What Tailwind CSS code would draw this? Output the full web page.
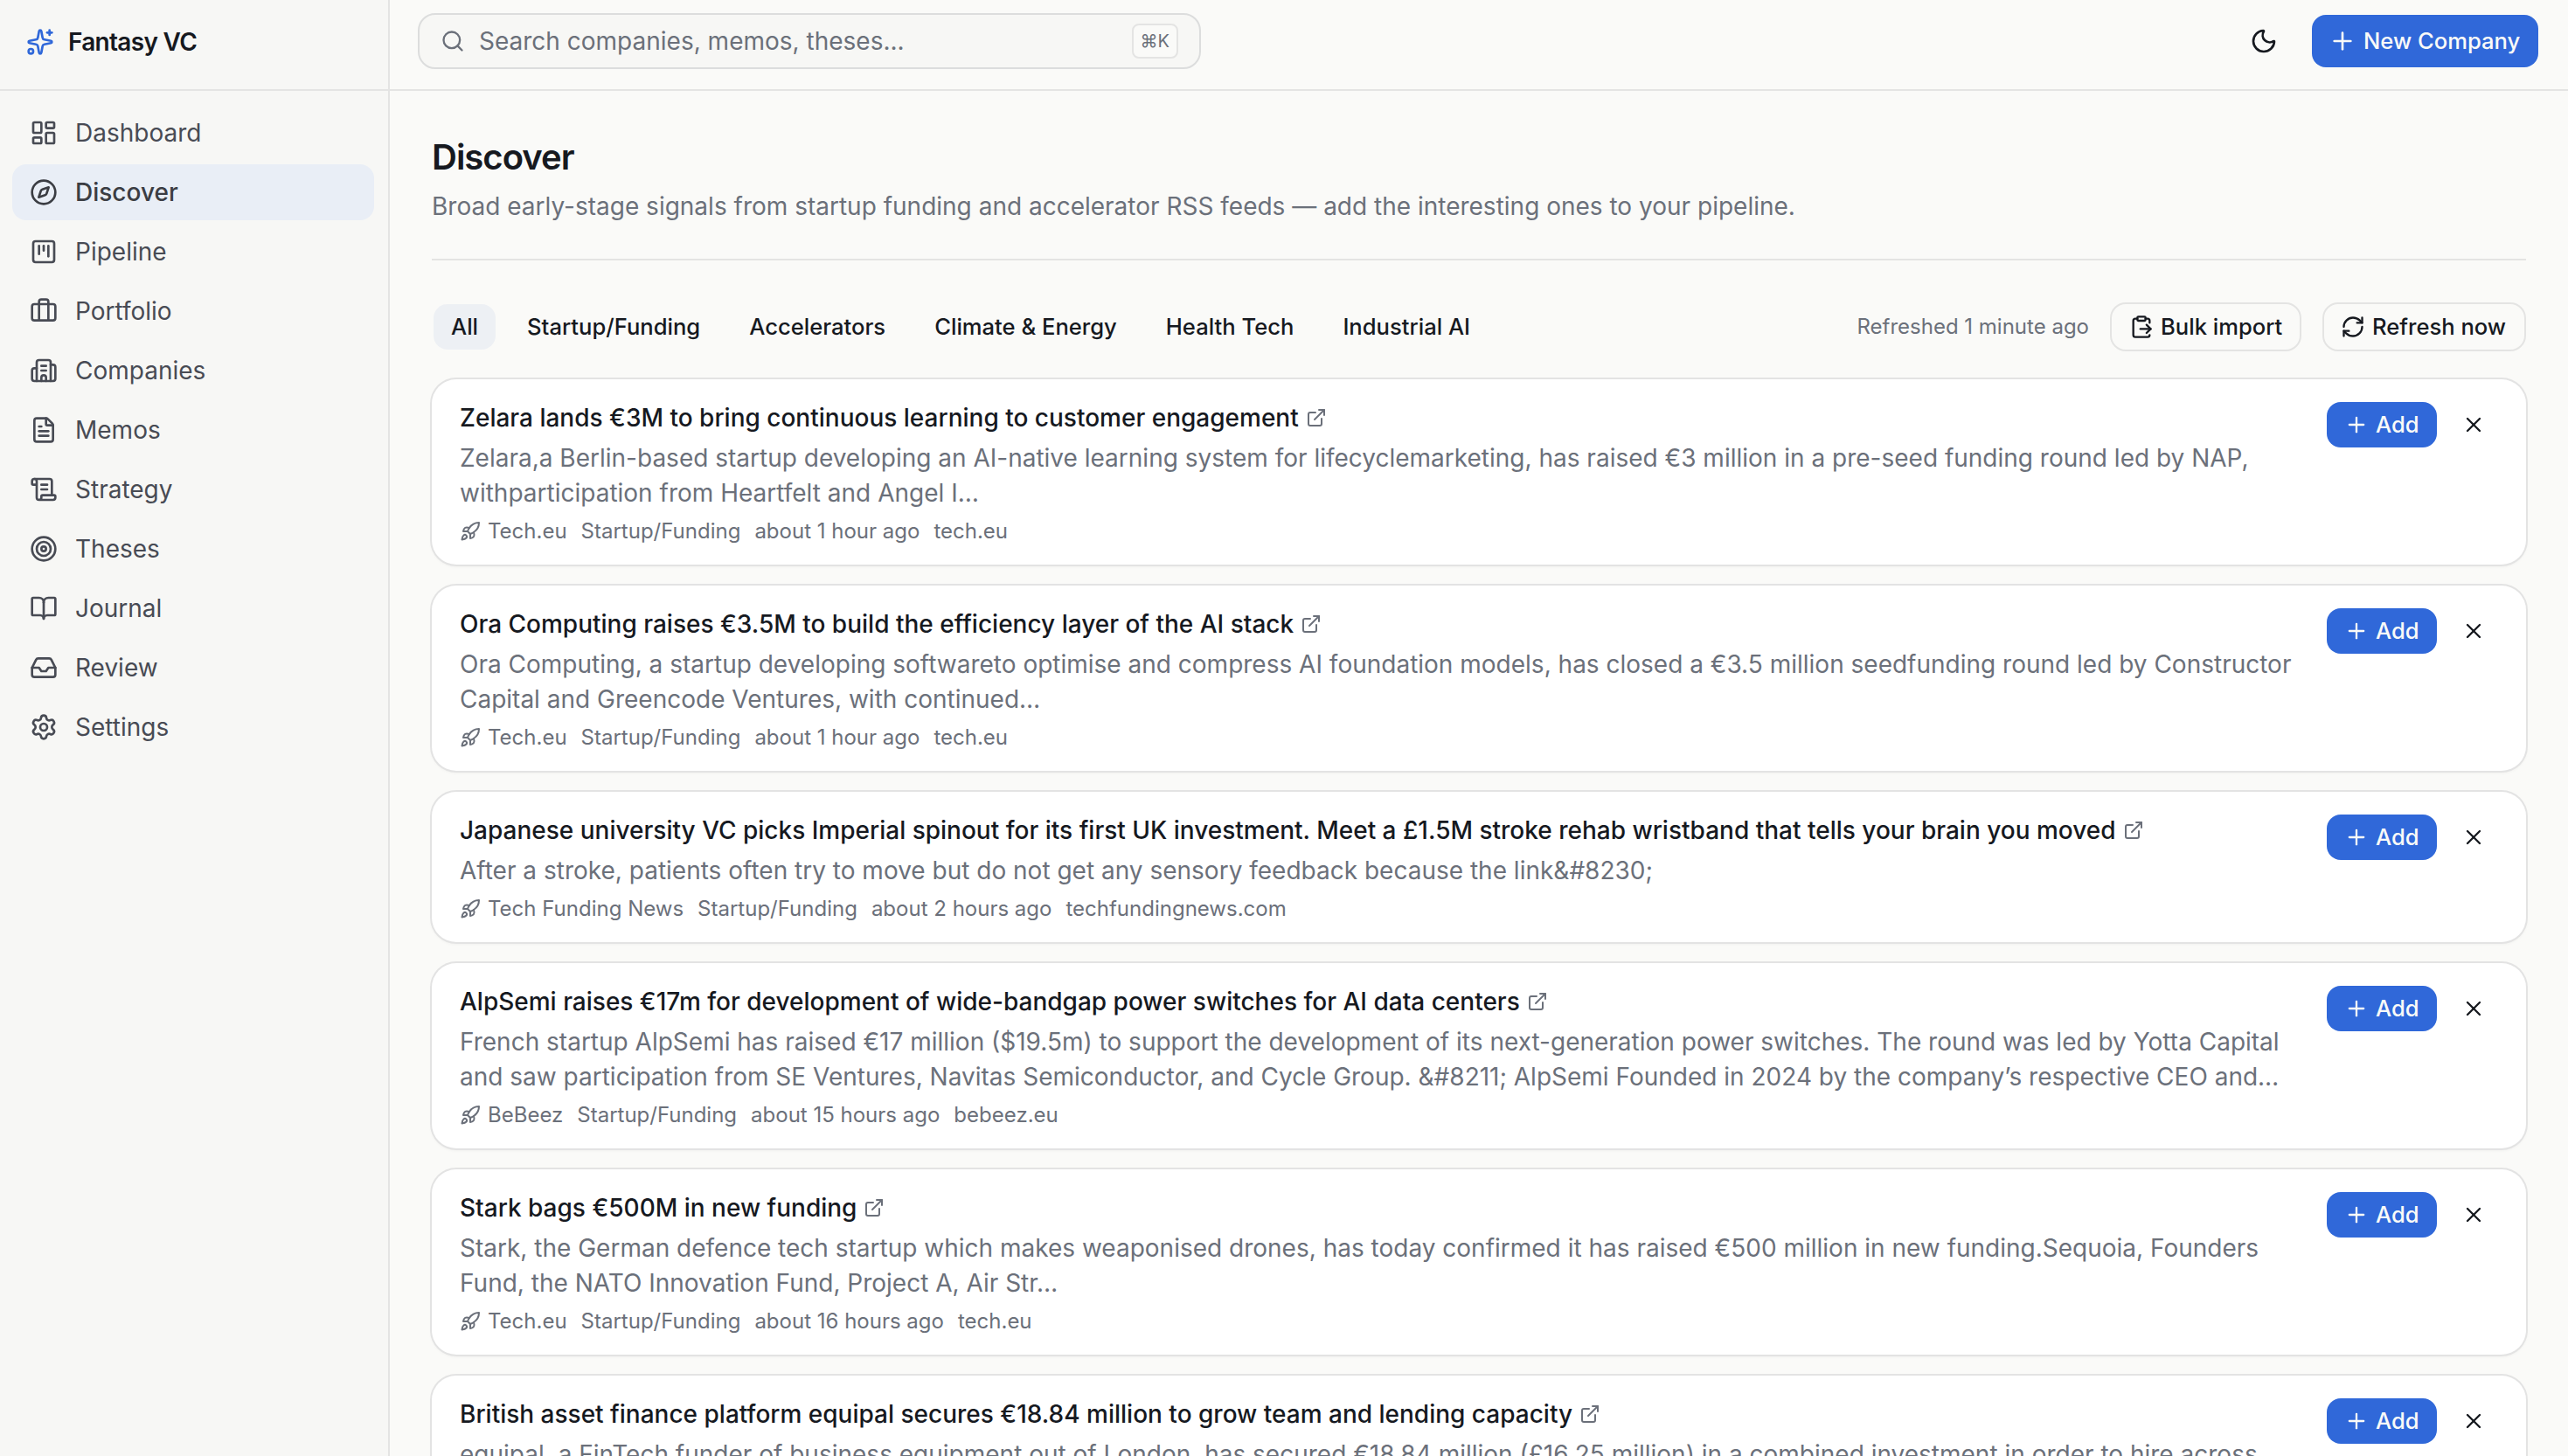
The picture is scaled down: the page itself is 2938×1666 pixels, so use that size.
<!DOCTYPE html>
<html lang="en">
<head>
<meta charset="utf-8">
<title>Fantasy VC</title>
<script src="https://cdn.jsdelivr.net/npm/@tailwindcss/browser@4"></script>
</head>
<body class="h-[1666px] w-[2938px] overflow-hidden bg-[#fafaf8] font-['Inter',sans-serif] text-[28px] leading-[40px] text-[#16191f] antialiased [font-variation-settings:'opsz'_14]">
<svg class="hidden">
  <symbol id="sparkles" viewBox="0 0 24 24"><path d="M11.017 2.814a1 1 0 0 1 1.966 0l1.051 5.558a2 2 0 0 0 1.594 1.594l5.558 1.051a1 1 0 0 1 0 1.966l-5.558 1.051a2 2 0 0 0-1.594 1.594l-1.051 5.558a1 1 0 0 1-1.966 0l-1.051-5.558a2 2 0 0 0-1.594-1.594l-5.558-1.051a1 1 0 0 1 0-1.966l5.558-1.051a2 2 0 0 0 1.594-1.594z"/><path d="M20 2v4"/><path d="M22 4h-4"/><circle cx="4" cy="20" r="2"/></symbol>
  <symbol id="dashboard" viewBox="0 0 24 24"><rect width="7" height="9" x="3" y="3" rx="1"/><rect width="7" height="5" x="14" y="3" rx="1"/><rect width="7" height="9" x="14" y="12" rx="1"/><rect width="7" height="5" x="3" y="16" rx="1"/></symbol>
  <symbol id="compass" viewBox="0 0 24 24"><circle cx="12" cy="12" r="10"/><path d="m16.24 7.76-1.804 5.411a2 2 0 0 1-1.265 1.265L7.76 16.24l1.804-5.411a2 2 0 0 1 1.265-1.265z"/></symbol>
  <symbol id="kanban" viewBox="0 0 24 24"><rect width="18" height="18" x="3" y="3" rx="2"/><path d="M8 7v7"/><path d="M12 7v4"/><path d="M16 7v9"/></symbol>
  <symbol id="briefcase" viewBox="0 0 24 24"><path d="M16 20V4a2 2 0 0 0-2-2h-4a2 2 0 0 0-2 2v16"/><rect width="20" height="14" x="2" y="6" rx="2"/></symbol>
  <symbol id="building" viewBox="0 0 24 24"><path d="M10 12h4"/><path d="M10 8h4"/><path d="M14 21v-3a2 2 0 0 0-4 0v3"/><path d="M6 10H4a2 2 0 0 0-2 2v7a2 2 0 0 0 2 2h16a2 2 0 0 0 2-2V9a2 2 0 0 0-2-2h-2"/><path d="M6 21V5a2 2 0 0 1 2-2h8a2 2 0 0 1 2 2v16"/></symbol>
  <symbol id="file" viewBox="0 0 24 24"><path d="M6 22a2 2 0 0 1-2-2V4a2 2 0 0 1 2-2h8a2.4 2.4 0 0 1 1.704.706l3.588 3.588A2.4 2.4 0 0 1 20 8v12a2 2 0 0 1-2 2z"/><path d="M14 2v5a1 1 0 0 0 1 1h5"/><path d="M10 9H8"/><path d="M16 13H8"/><path d="M16 17H8"/></symbol>
  <symbol id="scroll" viewBox="0 0 24 24"><path d="M15 12h-5"/><path d="M15 8h-5"/><path d="M19 17V5a2 2 0 0 0-2-2H4"/><path d="M8 21h12a2 2 0 0 0 2-2v-1a1 1 0 0 0-1-1H11a1 1 0 0 0-1 1v1a2 2 0 1 1-4 0V5a2 2 0 1 0-4 0v2a1 1 0 0 0 1 1h3"/></symbol>
  <symbol id="target" viewBox="0 0 24 24"><circle cx="12" cy="12" r="10"/><circle cx="12" cy="12" r="6"/><circle cx="12" cy="12" r="2"/></symbol>
  <symbol id="book" viewBox="0 0 24 24"><path d="M12 7v14"/><path d="M3 18a1 1 0 0 1-1-1V4a1 1 0 0 1 1-1h5a4 4 0 0 1 4 4 4 4 0 0 1 4-4h5a1 1 0 0 1 1 1v13a1 1 0 0 1-1 1h-6a3 3 0 0 0-3 3 3 3 0 0 0-3-3z"/></symbol>
  <symbol id="inbox" viewBox="0 0 24 24"><path d="M22 12h-6l-2 3h-4l-2-3H2"/><path d="M5.45 5.11 2 12v6a2 2 0 0 0 2 2h16a2 2 0 0 0 2-2v-6l-3.45-6.89A2 2 0 0 0 16.76 4H7.24a2 2 0 0 0-1.79 1.11z"/></symbol>
  <symbol id="settings" viewBox="0 0 24 24"><path d="M9.671 4.136a2.34 2.34 0 0 1 4.659 0 2.34 2.34 0 0 0 3.319 1.915 2.34 2.34 0 0 1 2.33 4.033 2.34 2.34 0 0 0 0 3.831 2.34 2.34 0 0 1-2.33 4.033 2.34 2.34 0 0 0-3.319 1.915 2.34 2.34 0 0 1-4.659 0 2.34 2.34 0 0 0-3.32-1.915 2.34 2.34 0 0 1-2.33-4.033 2.34 2.34 0 0 0 0-3.831A2.34 2.34 0 0 1 6.35 6.051a2.34 2.34 0 0 0 3.319-1.915"/><circle cx="12" cy="12" r="3"/></symbol>
  <symbol id="search" viewBox="0 0 24 24"><path d="m21 21-4.34-4.34"/><circle cx="11" cy="11" r="8"/></symbol>
  <symbol id="moon" viewBox="0 0 24 24"><path d="M20.985 12.486a9 9 0 1 1-9.473-9.472c.405-.022.617.46.402.803a6 6 0 0 0 8.268 8.268c.344-.215.825-.004.803.401"/></symbol>
  <symbol id="plus" viewBox="0 0 24 24"><path d="M5 12h14"/><path d="M12 5v14"/></symbol>
  <symbol id="x" viewBox="0 0 24 24"><path d="M18 6 6 18"/><path d="m6 6 12 12"/></symbol>
  <symbol id="import" viewBox="0 0 24 24"><rect width="8" height="4" x="8" y="2" rx="1"/><path d="M8 4H6a2 2 0 0 0-2 2v14a2 2 0 0 0 2 2h12a2 2 0 0 0 2-2"/><path d="M16 4h2a2 2 0 0 1 2 2v2"/><path d="M11 14h10"/><path d="m17 10 4 4-4 4"/></symbol>
  <symbol id="refresh" viewBox="0 0 24 24"><path d="M3 12a9 9 0 0 1 9-9 9.75 9.75 0 0 1 6.74 2.74L21 8"/><path d="M21 3v5h-5"/><path d="M21 12a9 9 0 0 1-9 9 9.75 9.75 0 0 1-6.74-2.74L3 16"/><path d="M8 16H3v5"/></symbol>
  <symbol id="external" viewBox="0 0 24 24"><path d="M15 3h6v6"/><path d="M10 14 21 3"/><path d="M18 13v6a2 2 0 0 1-2 2H5a2 2 0 0 1-2-2V8a2 2 0 0 1 2-2h6"/></symbol>
  <symbol id="rocket" viewBox="0 0 24 24"><path d="M4.5 16.5c-1.5 1.26-2 5-2 5s3.74-.5 5-2c.71-.84.7-2.13-.09-2.91a2.18 2.18 0 0 0-2.91-.09z"/><path d="m12 15-3-3a22 22 0 0 1 2-3.95A12.88 12.88 0 0 1 22 2c0 2.72-.78 7.5-6 11a22.35 22.35 0 0 1-4 2z"/><path d="M9 12H4s.55-3.03 2-4c1.62-1.08 5 0 5 0"/><path d="M12 15v5s3.03-.55 4-2c1.08-1.62 0-5 0-5"/></symbol>
</svg>

<div class="flex h-full">
  <aside class="flex w-[446px] shrink-0 flex-col border-r-2 border-[#e4e4e3] bg-[#f7f7f5]">
    <div class="flex h-[104px] shrink-0 items-center gap-4 border-b-2 border-[#e4e4e3] pb-[6px] pl-[30px]">
      <svg class="size-8 fill-none stroke-[#3068d9] stroke-2 [stroke-linecap:round] [stroke-linejoin:round]"><use href="#sparkles"/></svg>
      <span class="font-semibold tracking-[-0.7px]">Fantasy VC</span>
    </div>
    <nav id="nav" class="flex flex-col gap-1 pt-4 pr-4 pl-[14px]"></nav>
  </aside>

  <div class="flex min-w-0 flex-1 flex-col">
    <header class="flex h-[104px] shrink-0 items-center border-b-2 border-[#e4e4e3] pr-[34px] pb-2 pl-8">
      <div class="flex h-16 w-[896px] items-center rounded-[20px] border-2 border-[#dcdddd] bg-[#f7f7f5] pr-6 pl-6 text-[#6b707a]">
        <svg class="size-7 fill-none stroke-current stroke-2 [stroke-linecap:round] [stroke-linejoin:round]"><use href="#search"/></svg>
        <span class="ml-4 flex-1">Search companies, memos, theses...</span>
        <kbd class="flex h-10 items-center rounded-lg border-2 border-[#e4e4e3] bg-[#fafaf8] px-2 font-['Inter',sans-serif] text-[20px]">⌘K</kbd>
      </div>
      <svg class="mr-[39px] ml-auto size-8 fill-none stroke-current stroke-2 [stroke-linecap:round] [stroke-linejoin:round]"><use href="#moon"/></svg>
      <button class="flex h-[60px] w-[259px] items-center gap-2 rounded-[16px] bg-[#3068d9] pl-[19px] text-[25.6px] font-medium text-[#fafaf8]">
        <svg class="size-8 fill-none stroke-current stroke-2 [stroke-linecap:round] [stroke-linejoin:round]"><use href="#plus"/></svg>New Company
      </button>
    </header>

    <main class="flex flex-col px-12">
      <div class="flex h-[194px] flex-col border-b-2 border-[#e4e4e3] pt-12">
        <h1 class="text-[40px] leading-[56px] font-semibold tracking-[-1px]">Discover</h1>
        <p class="mt-1 leading-[48px] text-[#6b707a]">Broad early-stage signals from startup funding and accelerator RSS feeds — add the interesting ones to your pipeline.</p>
      </div>

      <div class="mt-12 flex h-14 items-center text-[25.6px] font-medium">
        <div class="flex gap-4 pl-[2px]">
          <span class="flex h-[52px] items-center rounded-[16px] bg-[#edf0f4] px-5">All</span>
          <span class="flex h-[52px] items-center px-5">Startup/Funding</span>
          <span class="flex h-[52px] items-center px-5">Accelerators</span>
          <span class="flex h-[52px] items-center px-5">Climate &amp; Energy</span>
          <span class="flex h-[52px] items-center px-5">Health Tech</span>
          <span class="flex h-[52px] items-center px-5">Industrial AI</span>
        </div>
        <div class="ml-auto flex items-center gap-6">
          <span class="text-[24px] font-normal text-[#6b707a]">Refreshed 1 minute ago</span>
          <button class="flex h-14 w-[219px] items-center gap-2 rounded-[18px] border-2 border-[#e4e4e3] pl-5 whitespace-nowrap"><svg class="size-7 shrink-0 fill-none stroke-current stroke-2 [stroke-linecap:round] [stroke-linejoin:round]"><use href="#import"/></svg>Bulk import</button>
          <button class="flex h-14 w-[233px] items-center gap-2 rounded-[18px] border-2 border-[#e4e4e3] pl-[19px] whitespace-nowrap"><svg class="size-7 shrink-0 fill-none stroke-current stroke-2 [stroke-linecap:round] [stroke-linejoin:round]"><use href="#refresh"/></svg>Refresh now</button>
        </div>
      </div>

      <div id="feed" class="mt-8 flex flex-col gap-6"></div>
    </main>
  </div>
</div>

<script>
const nav = [['dashboard','Dashboard'],['compass','Discover'],['kanban','Pipeline'],['briefcase','Portfolio'],['building','Companies'],['file','Memos'],['scroll','Strategy'],['target','Theses'],['book','Journal'],['inbox','Review'],['settings','Settings']];
document.getElementById('nav').innerHTML = nav.map(([icon, label]) => `
  <a class="flex h-16 items-center gap-5 rounded-[16px] px-5 ${label === 'Discover' ? 'bg-[#e9eef6] font-medium text-[#3b3d43]' : 'text-[#484b54]'}">
    <svg class="size-8 fill-none stroke-current stroke-2 [stroke-linecap:round] [stroke-linejoin:round]"><use href="#${icon}"/></svg>${label}
  </a>`).join('');

const items = [
  { title: 'Zelara lands €3M to bring continuous learning to customer engagement', lines: ['Zelara,a Berlin-based startup developing an AI-native learning system for lifecyclemarketing, has raised €3 million in a pre-seed funding round led by NAP,', 'withparticipation from Heartfelt and Angel I…'], meta: ['Tech.eu', 'about 1 hour ago', 'tech.eu'] },
  { title: 'Ora Computing raises €3.5M to build the efficiency layer of the AI stack', lines: ['Ora Computing, a startup developing softwareto optimise and compress AI foundation models, has closed a €3.5 million seedfunding round led by Constructor', 'Capital and Greencode Ventures, with continued…'], meta: ['Tech.eu', 'about 1 hour ago', 'tech.eu'] },
  { title: 'Japanese university VC picks Imperial spinout for its first UK investment. Meet a £1.5M stroke rehab wristband that tells your brain you moved', lines: ['After a stroke, patients often try to move but do not get any sensory feedback because the link&amp;#8230;'], meta: ['Tech Funding News', 'about 2 hours ago', 'techfundingnews.com'] },
  { title: 'AlpSemi raises €17m for development of wide-bandgap power switches for AI data centers', lines: ['French startup AlpSemi has raised €17 million ($19.5m) to support the development of its next-generation power switches. The round was led by Yotta Capital', 'and saw participation from SE Ventures, Navitas Semiconductor, and Cycle Group. &amp;#8211; AlpSemi Founded in 2024 by the company’s respective CEO and…'], meta: ['BeBeez', 'about 15 hours ago', 'bebeez.eu'] },
  { title: 'Stark bags €500M in new funding', lines: ['Stark, the German defence tech startup which makes weaponised drones, has today confirmed it has raised €500 million in new funding.Sequoia, Founders', 'Fund, the NATO Innovation Fund, Project A, Air Str…'], meta: ['Tech.eu', 'about 16 hours ago', 'tech.eu'] },
  { title: 'British asset finance platform equipal secures €18.84 million to grow team and lending capacity', lines: ['equipal, a FinTech funder of business equipment out of London, has secured €18.84 million (£16.25 million) in a combined investment in order to hire across'], meta: null },
];
document.getElementById('feed').innerHTML = items.map(({ title, lines, meta }) => `
  <article class="flex justify-between rounded-[28px] bg-white pt-6 pr-8 pb-[22px] pl-8 whitespace-nowrap shadow-[0_0_0_2px_#e3e3e3,0_2px_4px_0_rgb(0_0_0/0.06)]">
    <div>
      <h2 class="flex h-10 items-center gap-2 font-medium">${title}<svg class="size-6 fill-none stroke-[#6b707a] stroke-2 [stroke-linecap:round] [stroke-linejoin:round]"><use href="#external"/></svg></h2>
      <p class="mt-[6px] leading-[40px] text-[#6b707a]">${lines.join('<br>')}</p>
      ${meta ? `<div class="mt-2 flex h-8 items-center gap-4 text-[24px] text-[#6b707a]">
        <span class="flex items-center gap-2"><svg class="size-6 fill-none stroke-current stroke-2 [stroke-linecap:round] [stroke-linejoin:round]"><use href="#rocket"/></svg>${meta[0]}</span>
        <span>Startup/Funding</span><span>${meta[1]}</span><span>${meta[2]}</span>
      </div>` : ''}
    </div>
    <div class="mt-[2px] flex h-[52px] items-center gap-[14px]">
      <button class="flex h-[52px] w-[126px] items-center gap-2 rounded-[16px] bg-[#3068d9] pl-5 text-[25.6px] font-medium text-[#fafaf8]"><svg class="size-7 fill-none stroke-current stroke-2 [stroke-linecap:round] [stroke-linejoin:round]"><use href="#plus"/></svg>Add</button>
      <button class="flex size-14 items-center justify-center"><svg class="size-7 fill-none stroke-current stroke-2 [stroke-linecap:round] [stroke-linejoin:round]"><use href="#x"/></svg></button>
    </div>
  </article>`).join('');
</script>
</body>
</html>
